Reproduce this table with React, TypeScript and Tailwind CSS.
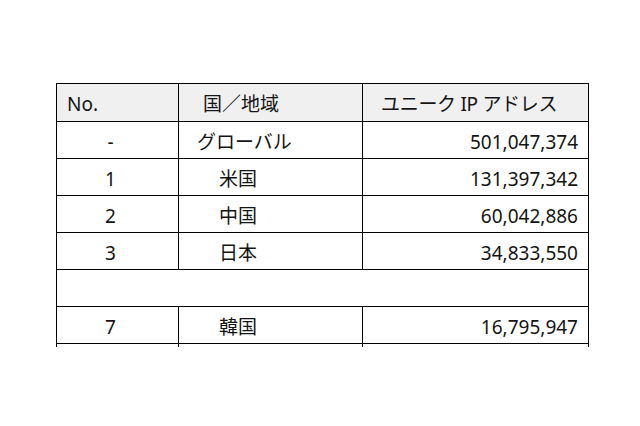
const rows = [
  { no: '-', name: 'グローバル', pad: 'pl-[18px]', ips: '501,047,374' },
  { no: '1', name: '米国', pad: 'pl-[40px]', ips: '131,397,342' },
  { no: '2', name: '中国', pad: 'pl-[40px]', ips: '60,042,886' },
  { no: '3', name: '日本', pad: 'pl-[40px]', ips: '34,833,550' },
]

const cell = 'border border-black h-[37px] p-0 align-middle'

export default function App() {
  return (
    <div
      className="w-[640px] h-[426px] bg-white pt-[83px] pl-[56px] text-[#141414]"
      style={{ fontFamily: '"Noto Sans", "Noto Sans CJK JP", sans-serif' }}
    >
      <table className="border-collapse table-fixed w-[532px] text-[19px] leading-none">
        <colgroup>
          <col className="w-[122px]" />
          <col className="w-[184px]" />
          <col className="w-[226px]" />
        </colgroup>
        <thead>
          <tr className="bg-[#f0f0f0]">
            <th className={`${cell} h-[38px] font-normal text-left pl-[10px] pt-[3px]`}>No.</th>
            <th className={`${cell} h-[38px] font-normal text-left pl-[24px] pt-[3px]`}>国／地域</th>
            <th className={`${cell} h-[38px] font-normal text-left pl-[18px] pt-[3px] tracking-[-0.3px]`}>ユニーク IP アドレス</th>
          </tr>
        </thead>
        <tbody>
          {rows.map((r) => (
            <tr key={r.no}>
              <td className={`${cell} text-center pr-[14px] pt-[4px]`}>{r.no}</td>
              <td className={`${cell} ${r.pad} pt-[4px]`}>{r.name}</td>
              <td className={`${cell} text-right pr-[10px] pt-[4px]`}>{r.ips}</td>
            </tr>
          ))}
          <tr>
            <td colSpan={3} className={cell}></td>
          </tr>
          <tr>
            <td className={`${cell} text-center pr-[14px] pt-[4px]`}>7</td>
            <td className={`${cell} pl-[40px] pt-[4px]`}>韓国</td>
            <td className={`${cell} text-right pr-[10px] pt-[4px]`}>16,795,947</td>
          </tr>
          <tr>
            <td className="border-x border-black h-[3px] p-0"></td>
            <td className="border-x border-black h-[3px] p-0"></td>
            <td className="border-x border-black h-[3px] p-0"></td>
          </tr>
        </tbody>
      </table>
    </div>
  )
}
